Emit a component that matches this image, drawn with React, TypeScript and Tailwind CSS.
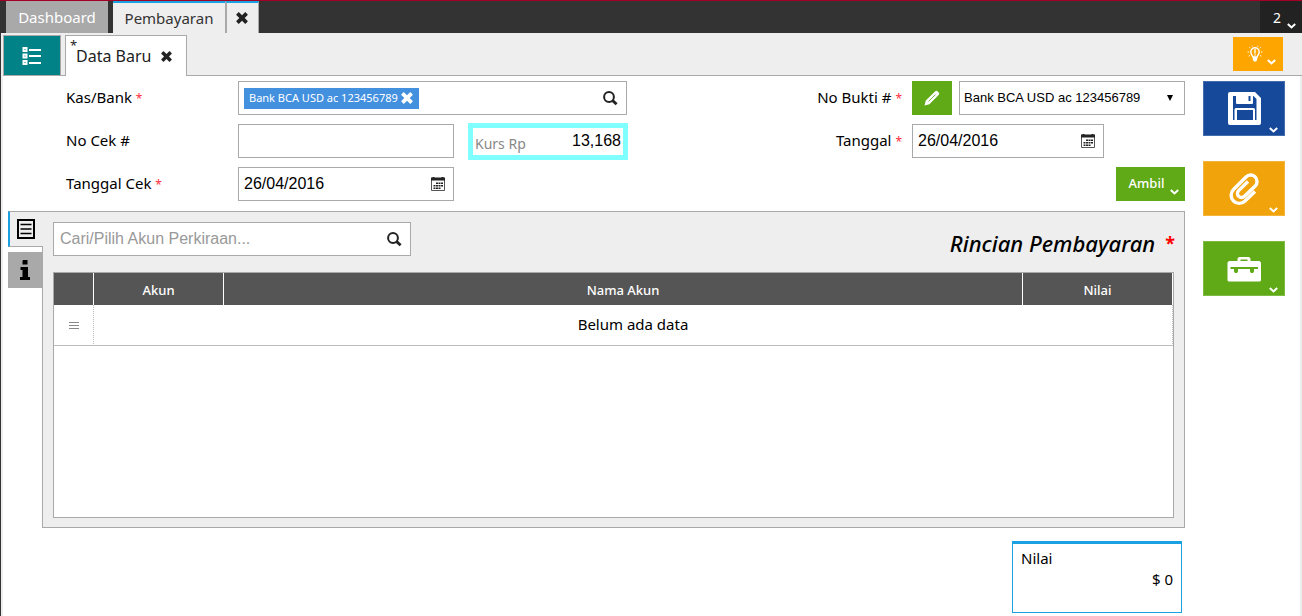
import type { ReactNode } from "react";

const Chevron = ({ className = "" }: { className?: string }) => (
  <svg viewBox="0 0 9 6" className={`h-[6px] w-[9px] ${className}`} fill="none" stroke="currentColor" strokeWidth="2">
    <path d="M0.8 1L4.5 4.4L8.2 1" />
  </svg>
);

const CrossIcon = ({ className = "" }: { className?: string }) => (
  <svg viewBox="0 0 12 12" className={className} fill="currentColor">
    <path d="M3 0.3L6 3.3L9 0.3H9.6L11.7 2.4V3L8.7 6L11.7 9V9.6L9.6 11.7H9L6 8.7L3 11.7H2.4L0.3 9.6V9L3.3 6L0.3 3V2.4L2.4 0.3Z" />
  </svg>
);

const SearchIcon = () => (
  <svg viewBox="0 0 15 15" className="h-[15px] w-[15px]" fill="none" stroke="#222">
    <circle cx="6" cy="6" r="4.9" strokeWidth="2" />
    <path d="M9.4 9.4L13.6 13.2" strokeWidth="2.8" />
  </svg>
);

const ListIcon = () => (
  <svg viewBox="0 0 20 18" className="h-[18px] w-5" fill="none" stroke="currentColor">
    <path d="M1.5 1h3v3h-3zM1.5 7.5h3v3h-3zM1.5 14h3v3h-3z" strokeWidth="2" />
    <path d="M7 3h12M7 9h12M7 16h12" strokeWidth="2" />
  </svg>
);

const BulbIcon = () => (
  <svg viewBox="0 0 16 18" className="h-[18px] w-4" fill="none" stroke="currentColor">
    <path d="M5.8 12C5.5 10.3 3.8 9.6 3.8 7a4.2 4.2 0 0 1 8.4 0c0 2.6-1.7 3.3-2 5z" strokeWidth="1.4" />
    <path d="M8 4v4.4M8 9.3v1.2" strokeWidth="1.4" />
    <path d="M5.8 12h4.4v3L9 16.5H7L5.8 15z" fill="currentColor" stroke="none" />
    <path d="M0.5 7h1.5M14 7h1.5M2.2 2.2l1 .9M13.8 2.2l-1 .9M5 .6l.4 1M11 .6l-.4 1M1.6 11.2l1.4-.8M14.4 11.2l-1.4-.8" strokeWidth="0.9" />
  </svg>
);

const CalendarIcon = () => (
  <svg viewBox="0 0 14 14" className="h-[14px] w-[14px]" fill="currentColor">
    <path d="M0.5 2.5h13v11H0.5z" fill="none" stroke="#555" />
    <path d="M0 0.5h1.5V0h2v0.5h7V0h2v0.5H14V3.5H0z" />
    <path d="M5 5.500h2V7H5zM7.500 5.500h2V7h-2zM10 5.500h2V7h-2zM2.500 8h2v1.500h-2zM5 8h2v1.500H5zM7.500 8h2v1.500h-2zM10 8h2v1.500h-2zM2.500 10.500h2V12h-2zM5 10.500h2V12H5zM7.500 10.500h2V12h-2z" />
  </svg>
);

const PencilIcon = () => (
  <svg viewBox="0 0 16 16" className="h-4 w-4" fill="currentColor">
    <path d="M0.5 15.5L1.8 10.6L11 1.4a1.9 1.9 0 0 1 2.7 0l.9.9a1.9 1.9 0 0 1 0 2.7L5.4 14.2z" />
    <path d="M4.5 11.5L11.5 4.5" stroke="#60a917" strokeWidth="0.8" />
  </svg>
);

const FloppyIcon = () => (
  <svg viewBox="0 0 33 33" className="h-[33px] w-[33px]" fill="currentColor">
    <path
      fillRule="evenodd"
      d="M2 0H27L33 6V31A2 2 0 0 1 31 33H2A2 2 0 0 1 0 31V2A2 2 0 0 1 2 0ZM5 4V28H6.500V17.500A1.500 1.500 0 0 1 8 16H25.500A1.500 1.500 0 0 1 27 17.500V28H28.500V7L25.500 4H25V11A1 1 0 0 1 24 12H9A1 1 0 0 1 8 11V4ZM9 18V28H25V18ZM20.500 4V9H22.500V4Z"
    />
  </svg>
);

const ClipIcon = () => (
  <svg viewBox="0 0 30 34" className="h-[34px] w-[30px]" fill="none" stroke="currentColor" strokeWidth="3.4">
    <path d="M26 19.5L16 29A8.1 8.1 0 0 1 4.5 17.5L17 5A6.3 6.3 0 0 1 26.2 14L15.5 24.3A4 4 0 0 1 9.6 18.6L19 9.5" />
  </svg>
);

const CaseIcon = () => (
  <svg viewBox="0 0 34 25" className="mt-px h-[25px] w-[34px]" fill="currentColor">
    <path
      fillRule="evenodd"
      d="M10.5 4V1.5L12 0H22L23.5 1.5V4H32.5L34 5.5V23.5L33 24.5H1.5L0.5 23.5V5.5L2 4ZM13.5 2.5V4H20.5V2.5ZM3.5 10V12H7V14.5L8 16H10L11 14.5V12H23V14.5L24 16H26L27 14.5V12H31V10Z"
    />
  </svg>
);

const DocIcon = () => (
  <svg viewBox="0 0 18 20" className="h-5 w-[18px]" fill="none" stroke="currentColor">
    <path d="M1 1h16v18H1z" strokeWidth="2" />
    <path d="M3.5 5.5h11M3.5 10h11M3.5 14.5h11" strokeWidth="1.3" />
  </svg>
);

const InfoIcon = () => (
  <svg viewBox="0 0 10 20" className="h-5 w-[10px]" fill="currentColor">
    <path d="M3 0h4.5v4.500H2.500V1zM0.500 7H8V17h2v3H0v-3h2.500v-7H0.500z" />
  </svg>
);

const Required = () => <span className="text-[12px] text-[#ff2d3d]">*</span>;

const fieldBox = "flex h-[34px] items-center border border-[#a9a9a9] bg-white";

interface DateFieldProps {
  id: string;
  className: string;
}

const DateField = ({ id, className }: DateFieldProps) => (
  <div className={`${fieldBox} pl-[5px] pr-2 ${className}`}>
    <input
      id={id}
      type="text"
      defaultValue="26/04/2016"
      className="min-w-0 flex-1 font-['Liberation_Sans',Arial,sans-serif] text-base outline-none"
    />
    <button type="button" aria-label="Pilih tanggal" className="text-[#222]">
      <CalendarIcon />
    </button>
  </div>
);

interface ActionButtonProps {
  label: string;
  className: string;
  children: ReactNode;
}

const ActionButton = ({ label, className, children }: ActionButtonProps) => (
  <button
    type="button"
    aria-label={label}
    className={`relative flex h-[55px] w-[82px] items-center justify-center border border-white/20 text-white ${className}`}
  >
    {children}
    <Chevron className="absolute right-[6px] bottom-[2px]" />
  </button>
);

const TopBar = () => (
  <header className="flex h-[33px] items-stretch border-t border-[#a20025] bg-[#333] pl-[6px] text-[15px]">
    <button type="button" className="mr-[5px] w-[102px] bg-[#a9a9a9] text-white">
      Dashboard
    </button>
    <button type="button" className="w-[112px] border-t-2 border-[#1ba1e2] bg-[#eee] text-[#333]">
      Pembayaran
    </button>
    <button
      type="button"
      aria-label="Tutup Pembayaran"
      className="flex w-[34px] items-center justify-center border-t-2 border-r border-l-2 border-t-[#1ba1e2] border-r-[#a9a9a9] border-l-[#a9a9a9] bg-[#eee] pr-px text-[#222]"
    >
      <CrossIcon className="h-3 w-3" />
    </button>
    <button type="button" className="relative ml-auto w-[42px] bg-[#222] pr-2 text-[14px] text-white">
      2
      <Chevron className="absolute right-[6px] bottom-1" />
    </button>
  </header>
);

const PageTabs = () => (
  <nav className="flex h-[43px] items-end border-b border-[#a9a9a9] bg-[#eee]">
    <button
      type="button"
      aria-label="Daftar"
      className="flex h-10 w-[58px] items-center justify-center border border-b-0 border-[#a9a9a9] bg-[#008287] text-white"
    >
      <ListIcon />
    </button>
    <div className="relative -mb-px ml-1 flex h-[41px] w-[122px] items-center border border-b-0 border-[#a9a9a9] bg-white pl-[10px] text-[16px]">
      <span className="absolute top-0 left-1 text-[13px] text-[#222]">*</span>
      <span className="text-[#222]">Data Baru</span>
      <button type="button" aria-label="Tutup Data Baru" className="ml-[10px] text-[#222]">
        <CrossIcon className="h-[11px] w-[11px]" />
      </button>
    </div>
    <button type="button" aria-label="Bantuan" className="relative mr-[19px] mb-1 ml-auto h-[34px] w-[50px] bg-[#ffa500] pl-[14px] text-white">
      <BulbIcon />
      <Chevron className="absolute right-[7px] bottom-[6px]" />
    </button>
  </nav>
);

const PaymentForm = () => (
  <form className="flex justify-between pl-[63px] text-[15px]">
    <div className="grid grid-cols-[172px_389px] items-center gap-y-[9px]">
      <label htmlFor="kas" className="pb-[2px]">
        Kas/Bank <Required />
      </label>
      <div className={`${fieldBox} pr-2 pl-[5px]`}>
        <span className="flex h-[21px] items-center gap-[3px] bg-[#4390df] pr-[6px] pl-[5px] text-[11px] whitespace-nowrap text-white">
          Bank BCA USD ac 123456789
          <button type="button" aria-label="Hapus">
            <CrossIcon className="h-3 w-3" />
          </button>
        </span>
        <input id="kas" type="text" className="min-w-0 flex-1 outline-none" />
        <button type="button" aria-label="Cari">
          <SearchIcon />
        </button>
      </div>

      <label htmlFor="cek" className="pb-[2px]">
        No Cek #
      </label>
      <div className="flex h-[34px] items-center justify-between">
        <input id="cek" type="text" className="h-[34px] w-[216px] border border-[#a9a9a9] px-[5px] outline-none" />
        <div className="-mr-px flex h-[37px] w-40 items-center border-[5px] border-[#7fffff] px-[2px]">
          <label htmlFor="kurs" className="mt-1 text-[14px] whitespace-nowrap text-[#888]">
            Kurs Rp
          </label>
          <input
            id="kurs"
            type="text"
            defaultValue="13,168"
            className="min-w-0 flex-1 text-right font-['Liberation_Sans',Arial,sans-serif] text-base outline-none"
          />
        </div>
      </div>

      <label htmlFor="tanggal-cek" className="pb-[2px]">
        Tanggal Cek <Required />
      </label>
      <DateField id="tanggal-cek" className="w-[216px]" />
    </div>

    <div className="grid grid-cols-[auto_273px] items-center gap-x-[10px] gap-y-[9px]">
      <label htmlFor="bukti" className="pb-[2px] text-right">
        No Bukti # <Required />
      </label>
      <div className="flex gap-[7px]">
        <button type="button" aria-label="Ubah" className="flex h-[34px] w-10 items-center justify-center bg-[#60a917] text-white">
          <PencilIcon />
        </button>
        <div className="relative flex-1">
          <select
            id="bukti"
            className="h-[34px] w-full appearance-none border border-[#a9a9a9] bg-white pl-1 font-['Liberation_Sans',Arial,sans-serif] text-[13px] outline-none"
          >
            <option>Bank BCA USD ac 123456789</option>
          </select>
          <svg viewBox="0 0 6 6" className="pointer-events-none absolute top-[14px] right-3 h-[6px] w-[6px]">
            <path d="M0 0h6L3 6z" />
          </svg>
        </div>
      </div>

      <label htmlFor="tanggal" className="pb-[2px] text-right">
        Tanggal <Required />
      </label>
      <DateField id="tanggal" className="w-48" />

      <button type="button" className="relative col-start-2 h-[34px] w-[69px] justify-self-end bg-[#60a917] pr-2 text-[13px] font-medium text-white">
        Ambil
        <Chevron className="absolute right-[6px] bottom-[6px]" />
      </button>
    </div>
  </form>
);

const DetailPanel = () => (
  <section className="mt-[10px] flex pl-[5px]">
    <div className="z-10 -mr-px flex w-[35px] flex-col gap-[5px]">
      <button
        type="button"
        aria-label="Rincian"
        className="flex h-9 items-center justify-center border-y border-l-2 border-y-[#a9a9a9] border-l-[#1ba1e2] bg-[#eee] pr-px"
      >
        <DocIcon />
      </button>
      <button type="button" aria-label="Info" className="mr-px flex h-9 items-center justify-center bg-[#a9a9a9]">
        <InfoIcon />
      </button>
    </div>
    <div className="flex-1 border border-[#a9a9a9] bg-[#eee] p-[10px] pb-[9px]">
      <div className="flex items-start justify-between">
        <div className={`${fieldBox} w-[358px] pr-2 pl-[6px]`}>
          <input
            type="text"
            aria-label="Cari akun"
            placeholder="Cari/Pilih Akun Perkiraan..."
            className="min-w-0 flex-1 font-['Liberation_Sans',Arial,sans-serif] text-base outline-none placeholder:text-[#999]"
          />
          <button type="button" aria-label="Cari">
            <SearchIcon />
          </button>
        </div>
        <h2 className="mt-[5px] -mr-px flex gap-[10px] text-[22px] leading-8 font-medium italic">
          Rincian Pembayaran <span className="text-[18px] font-bold text-[#f00] not-italic">*</span>
        </h2>
      </div>
      <div className="mt-[13px] h-[246px] border border-[#a9a9a9] bg-white">
        <table className="w-full table-fixed border-separate border-spacing-0">
          <colgroup>
            <col className="w-10" />
            <col className="w-[130px]" />
            <col />
            <col className="w-[150px]" />
          </colgroup>
          <thead className="bg-[#555] text-[13px] text-white">
            <tr className="h-8">
              <th className="border-r border-white"></th>
              <th className="border-r border-white pt-[3px] font-medium">Akun</th>
              <th className="border-r border-white pt-[3px] font-medium">Nama Akun</th>
              <th className="border-r border-white pt-[3px] font-medium">Nilai</th>
            </tr>
          </thead>
          <tbody>
            <tr className="h-[41px] text-center text-[15px]">
              <td className="border-r border-b border-[#bbb] [border-right-style:dotted]">
                <svg viewBox="0 0 10 8" className="mx-auto mt-px h-2 w-[10px]" stroke="#888">
                  <path d="M0 0.5h10M0 3.5h10M0 6.5h10" />
                </svg>
              </td>
              <td colSpan={3} className="border-r border-b border-[#bbb] pb-[2px] [border-right-style:dotted]">
                Belum ada data
              </td>
            </tr>
          </tbody>
        </table>
      </div>
    </div>
  </section>
);

export default function App() {
  return (
    <div className="flex min-h-screen flex-col bg-white font-['Noto_Sans','Open_Sans',sans-serif] text-black">
      <TopBar />
      <div className="flex flex-1 flex-col border-l border-[#333]">
        <div className="flex flex-1 flex-col bg-[#eee] pl-[2px]">
          <PageTabs />
          <main className="mr-[2px] flex flex-1 gap-[18px] bg-white pt-[5px] pr-[15px]">
            <div className="min-w-0 flex-1">
              <PaymentForm />
              <DetailPanel />
              <div className="mt-[13px] mr-[3px] ml-auto h-[72px] w-[170px] border border-t-[3px] border-[#1ba1e2] px-2 pt-1 text-[15px] leading-[21px]">
                <div>Nilai</div>
                <div className="text-right">$ 0</div>
              </div>
            </div>
            <aside className="flex flex-col gap-[25px]">
              <ActionButton label="Simpan" className="bg-[#16499a]">
                <FloppyIcon />
              </ActionButton>
              <ActionButton label="Lampiran" className="bg-[#f0a30a]">
                <ClipIcon />
              </ActionButton>
              <ActionButton label="Peralatan" className="bg-[#60a917]">
                <CaseIcon />
              </ActionButton>
            </aside>
          </main>
        </div>
      </div>
    </div>
  );
}
